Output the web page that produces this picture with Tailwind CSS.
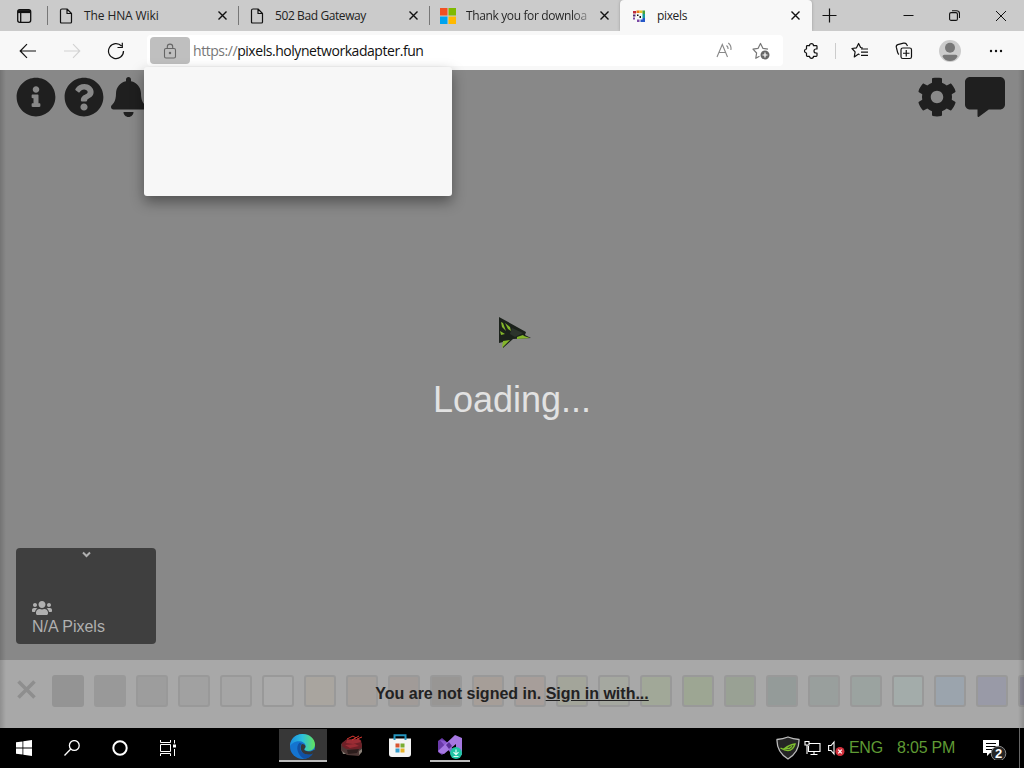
<!DOCTYPE html>
<html lang="en">

<head>
    <meta charset="utf-8" />
    <meta name="viewport" content="width=device-width, initial-scale=1" />
    <title>pixels</title>
    <script src="https://cdn.jsdelivr.net/npm/@tailwindcss/browser@4"></script>
</head>

<body class="w-[1024px] h-[768px] overflow-hidden flex flex-col bg-black font-['Liberation_Sans',sans-serif]">
    <!-- Tab strip -->
    <div class="h-[31px] shrink-0 flex bg-[#cbcbcb] font-['Open_Sans',sans-serif] text-[12px] text-[#222]">
        <div class="w-12 flex items-center justify-center border-r border-[#777] my-1.5">
            <svg class="w-4 h-4" viewBox="0 0 16 16" fill="none" stroke="#111" stroke-width="1.3"><rect x="1.7" y="1.7" width="13" height="12.6" rx="2" /><path d="M2 3.6h12.5" stroke-width="3" /><path d="M4.7 4v10" /></svg>
        </div>
        <div class="w-[191px] flex items-center border-r border-[#777] my-1.5 pl-[11px] pr-[10px]">
            <svg class="w-3.5 h-4" viewBox="0 0 14 16" fill="none" stroke="#111" stroke-width="1.2" stroke-linejoin="round"><path d="M1.5 2.5q0-1.5 1.5-1.5h5l4.5 4.5V14q0 1-1 1h-9q-1 0-1-1zM8 1v4.5h4.5" /></svg>
            <span class="ml-[11px] flex-1 whitespace-nowrap tracking-[-0.1px]">The HNA Wiki</span>
            <svg class="w-[11px] h-[11px]" viewBox="0 0 11 11" stroke="#111" stroke-width="1.4"><path d="M1.5 1.5l8 8m0-8l-8 8" /></svg>
        </div>
        <div class="w-[191px] flex items-center border-r border-[#777] my-1.5 pl-[11px] pr-[10px]">
            <svg class="w-3.5 h-4" viewBox="0 0 14 16" fill="none" stroke="#111" stroke-width="1.2" stroke-linejoin="round"><path d="M1.5 2.5q0-1.5 1.5-1.5h5l4.5 4.5V14q0 1-1 1h-9q-1 0-1-1zM8 1v4.5h4.5" /></svg>
            <span class="ml-[11px] flex-1 whitespace-nowrap tracking-[-0.4px]">502 Bad Gateway</span>
            <svg class="w-[11px] h-[11px]" viewBox="0 0 11 11" stroke="#111" stroke-width="1.4"><path d="M1.5 1.5l8 8m0-8l-8 8" /></svg>
        </div>
        <div class="w-[190px] flex items-center my-1.5 pl-[10px] pr-[10px]">
            <svg class="w-4 h-4 shrink-0" viewBox="0 0 16 16"><path fill="#f25022" d="M0 0h7.5v7.5H0z" /><path fill="#7fba00" d="M8.5 0H16v7.5H8.5z" /><path fill="#00a4ef" d="M0 8.5h7.5V16H0z" /><path fill="#ffb900" d="M8.5 8.5H16V16H8.5z" /></svg>
            <span class="ml-[10px] w-[124px] whitespace-nowrap tracking-[-0.37px] bg-gradient-to-r from-[#222] from-85% to-[#222]/25 bg-clip-text text-transparent">Thank you for downloa</span>
            <svg class="ml-auto w-[11px] h-[11px] shrink-0" viewBox="0 0 11 11" stroke="#111" stroke-width="1.4"><path d="M1.5 1.5l8 8m0-8l-8 8" /></svg>
        </div>
        <div class="w-[192px] flex items-center bg-[#f8f8f8] rounded-t pl-3 pr-[11px] shadow-[0_0_3px_#999]">
            <svg class="w-[14px] h-[14px]" viewBox="0 0 14 14"><path fill="#c02a3c" d="M1 2h3v2.5H1z" /><path fill="#e8751a" d="M4.5 1.500h3V4h-3z" /><path fill="#e9c32a" d="M7.500 1.500h3V4h-3z" /><path fill="#46a33b" d="M10.500 1.500H13V5h-2.500z" /><path fill="#552a69" d="M1 5.500h2.500v2H1z" /><path fill="#111" d="M5 5.500h1.500V7H5zM7.500 7H9v2H7.500z" /><path fill="#179d9b" d="M10.500 5H13v4h-2.500z" /><path fill="#7b49a5" d="M1 8.500h2v2H1zM5 10.500h2.500V13H5z" /><path fill="#2558c8" d="M8.500 10.500h2V13h-2zM10.500 9H13v4h-2.500z" /></svg>
            <span class="ml-[11px] flex-1 tracking-[-0.35px]">pixels</span>
            <svg class="w-[11px] h-[11px]" viewBox="0 0 11 11" stroke="#111" stroke-width="1.4"><path d="M1.5 1.5l8 8m0-8l-8 8" /></svg>
        </div>
        <div class="flex-1 flex items-center pl-[10px] pr-[17px]">
            <svg class="w-[15px] h-[15px]" viewBox="0 0 15 15" stroke="#111" stroke-width="1.2"><path d="M7.5.5v14m-7-7h14" /></svg>
            <svg class="ml-auto w-[11px] h-[11px]" viewBox="0 0 11 11" stroke="#111"><path d="M.5 5.5h10" /></svg>
            <svg class="ml-[35px] w-[11px] h-[11px]" viewBox="0 0 11 11" fill="none" stroke="#111" stroke-width="1.1"><rect x=".6" y="2.6" width="7.8" height="7.8" rx="1.5" /><path d="M3 .7h4.500q3 0 3 3V8" /></svg>
            <svg class="ml-[35px] w-[12px] h-[12px]" viewBox="0 0 12 12" stroke="#111"><path d="M1 1l10 10m0-10L1 11" /></svg>
        </div>
    </div>

    <!-- Toolbar -->
    <div class="h-[39px] shrink-0 flex items-center bg-[#f8f8f8] pl-[19px] pr-[21px]">
        <svg class="w-[18px] h-4" viewBox="0 0 18 16" fill="none" stroke="#111" stroke-width="1.2"><path d="M17 8H1.5M8 1.2L1.2 8 8 14.8" /></svg>
        <svg class="ml-[26px] w-[18px] h-4" viewBox="0 0 18 16" fill="none" stroke="#d2d2d2" stroke-width="1.1"><path d="M1 8h15.5M10 1.2L16.8 8 10 14.8" /></svg>
        <svg class="ml-[26px] w-[18px] h-[18px]" viewBox="0 0 18 18" fill="none" stroke="#111" stroke-width="1.2"><path d="M16.5 9A7.500 7.500 0 1 1 14.500 4M15.300.8v4.700h-4.800" /></svg>
        <div class="ml-[22px] w-[636px] h-[31px] flex items-center bg-white rounded-sm pl-[3px] pr-[13px] font-['Open_Sans',sans-serif] text-[14px] text-[#111]">
            <div class="w-10 h-[27px] flex items-center justify-center bg-[#bfbfbf] rounded-sm">
                <svg class="w-[14px] h-4" viewBox="0 0 14 16" fill="none" stroke="#666" stroke-width="1.1"><rect x="1.5" y="5.5" width="11" height="9.5" rx="1.5" /><path d="M4.300 5.500V3.800a2.700 2.700 0 0 1 5.400 0v1.700" /><circle cx="7" cy="10" r=".7" fill="#555" /></svg>
            </div>
            <span class="ml-[3px] tracking-[-0.45px] whitespace-nowrap"><span class="text-[#777]">https://</span>pixels.holynetworkadapter.fun</span>
            <svg class="ml-auto w-[17px] h-[17px]" viewBox="0 0 17 17" fill="none" stroke="#888" stroke-width="1.1"><path d="M1 15L6.300 2.500 11.500 15M3 10.500h6.800M10.500 3.500q1.800 1.500 1.600 3.500M12.300 1q3.300 2.500 2.600 7" /></svg>
            <svg class="ml-[19px] w-[18px] h-[18px]" viewBox="0 0 18 18" fill="none" stroke="#777" stroke-width="1.2" stroke-linejoin="round"><path d="M7.500 14.200L3.800 16.300l.8-5.300L1 7.200l5-.8L8.500 1.500 11 6.400l5 .8" /><circle cx="13" cy="13" r="4.500" fill="#666" stroke="none" /><path d="M13 10.500v5M10.500 13h5" stroke="#fff" /></svg>
        </div>
        <!-- Extensions: puzzle piece with a bump on the left and a notch on the right -->
        <svg class="ml-[20px] w-4 h-4" viewBox="0 0 16 16" fill="none" stroke="#111" stroke-width="1.2" stroke-linejoin="round"><path d="M3.500 3.500q0-.8.8-.8H6.500a2 2 0 0 1 4 0h2.700q.8 0 .8.800v2.500h-1a1.900 1.900 0 1 0 0 4h1v2.500q0 .8-.8.8h-2.700a2 2 0 0 1-4 0H4.300q-.8 0-.8-.8V10a2 2 0 0 1 0-4z" /></svg>
        <div class="ml-[16px] w-px h-[16px] bg-[#ccc]"></div>
        <svg class="ml-[15px] w-[18px] h-[17px]" viewBox="0 0 18 17" fill="none" stroke="#111" stroke-width="1.2" stroke-linejoin="round"><path d="M8.500 12.700l-1-.6-4.200 2.800.8-5L1 6.500l4.500-.7L7.600 1.500l2 4 2 .4M10 7h7M10 10.200h7M10 13.400h7" /></svg>
        <svg class="ml-[26px] w-[18px] h-[18px]" viewBox="0 0 18 18" fill="none" stroke="#111" stroke-width="1.2"><rect x="6" y="6" width="10.5" height="10.5" rx="1.8" /><path d="M11.250 8v6.500M8 11.250h6.500M4 12.500Q3 12 2.500 10L1.300 5.200q-.4-2 1.500-2.600L8.500 1.200q2-.4 3 1L12.500 4" /></svg>
        <svg class="ml-[26px] w-[22px] h-[22px]" viewBox="0 0 22 22"><circle cx="11" cy="11" r="11" fill="#ccc" /><circle cx="11" cy="7.800" r="5" fill="#777" /><path fill="#777" d="M3.500 16.500q0-1.800 2-1.800h11q2 0 2 1.800-2.500 4.500-7.500 4.500t-7.500-4.500z" /></svg>
        <svg class="ml-auto w-[14px] h-1" viewBox="0 0 14 4" fill="#111"><circle cx="2" cy="2" r="1.2" /><circle cx="7" cy="2" r="1.2" /><circle cx="12" cy="2" r="1.2" /></svg>
    </div>

    <!-- Page -->
    <main class="relative h-[658px] shrink-0 flex flex-col bg-[#888]">
        <div class="flex justify-between pl-4 pr-[19px] pt-[7px] text-[#1f1f1f]">
            <div class="flex gap-2">
                <svg class="w-10 h-10" viewBox="0 0 512 512" fill="currentColor"><path d="M256 8C119.043 8 8 119.083 8 256c0 136.997 111.043 248 248 248s248-111.003 248-248C504 119.083 392.957 8 256 8zm0 110c23.196 0 42 18.804 42 42s-18.804 42-42 42-42-18.804-42-42 18.804-42 42-42zm56 254c0 6.627-5.373 12-12 12h-88c-6.627 0-12-5.373-12-12v-24c0-6.627 5.373-12 12-12h12v-64h-12c-6.627 0-12-5.373-12-12v-24c0-6.627 5.373-12 12-12h64c6.627 0 12 5.373 12 12v100h12c6.627 0 12 5.373 12 12v24z" /></svg>
                <svg class="w-10 h-10" viewBox="0 0 512 512" fill="currentColor"><path d="M504 256c0 136.997-111.043 248-248 248S8 392.997 8 256C8 119.083 119.043 8 256 8s248 111.083 248 248zM262.655 90c-54.497 0-89.255 22.957-116.549 63.758-3.536 5.286-2.353 12.415 2.715 16.258l34.699 26.310c5.205 3.947 12.621 3.008 16.665-2.122 17.864-22.658 30.113-35.797 57.303-35.797 20.429 0 45.698 13.148 45.698 32.958 0 14.976-12.363 22.667-32.534 33.976C247.128 238.528 216 254.941 216 296v4c0 6.627 5.373 12 12 12h56c6.627 0 12-5.373 12-12v-1.333c0-28.462 83.186-29.647 83.186-106.667 0-58.002-60.165-102-116.531-102zM256 338c-25.365 0-46 20.635-46 46 0 25.364 20.635 46 46 46s46-20.636 46-46c0-25.365-20.635-46-46-46z" /></svg>
                <svg class="w-[35px] h-10 -ml-px" viewBox="0 0 448 512" fill="currentColor"><path d="M224 512c35.320 0 63.970-28.650 63.970-64H160.030c0 35.350 28.650 64 63.970 64zm215.390-149.710c-19.320-20.760-55.470-51.990-55.470-154.290 0-77.700-54.480-139.900-127.940-155.160V32c0-17.670-14.320-32-31.980-32s-31.980 14.330-31.980 32v20.840C118.560 68.100 64.080 130.300 64.080 208c0 102.300-36.150 133.530-55.470 154.290-6 6.450-8.660 14.160-8.610 21.710.11 16.400 12.980 32 32.100 32h383.800c19.120 0 32-15.600 32.100-32 .05-7.550-2.610-15.270-8.610-21.710z" /></svg>
            </div>
            <div class="flex gap-2">
                <svg class="w-10 h-10" viewBox="0 0 512 512" fill="currentColor"><path d="M487.400 315.700l-42.600-24.600c4.300-23.200 4.300-47 0-70.200l42.600-24.600c4.900-2.800 7.100-8.600 5.500-14-11.100-35.600-30-67.800-54.700-94.600-3.800-4.100-10-5.100-14.800-2.300L380.800 110c-17.900-15.400-38.500-27.300-60.800-35.100V25.800c0-5.600-3.900-10.500-9.400-11.700-36.700-8.200-74.300-7.800-109.200 0-5.500 1.200-9.400 6.100-9.400 11.700V75c-22.200 7.900-42.800 19.800-60.800 35.100L88.700 85.500c-4.900-2.800-11-1.900-14.800 2.300-24.700 26.700-43.600 58.900-54.700 94.600-1.700 5.400.6 11.200 5.500 14L67.300 221c-4.300 23.200-4.300 47 0 70.200l-42.600 24.600c-4.900 2.800-7.100 8.600-5.500 14 11.100 35.600 30 67.800 54.700 94.600 3.800 4.100 10 5.100 14.800 2.300l42.600-24.600c17.900 15.400 38.500 27.300 60.800 35.100v49.200c0 5.600 3.900 10.500 9.400 11.700 36.700 8.200 74.300 7.800 109.200 0 5.500-1.200 9.400-6.100 9.400-11.700v-49.200c22.200-7.900 42.800-19.800 60.800-35.100l42.600 24.600c4.900 2.800 11 1.900 14.800-2.300 24.700-26.700 43.600-58.900 54.700-94.600 1.500-5.500-.7-11.300-5.600-14.100zM256 336c-44.100 0-80-35.900-80-80s35.900-80 80-80 80 35.900 80 80-35.900 80-80 80z" /></svg>
                <svg class="w-10 h-10" viewBox="0 0 512 512" fill="currentColor"><path d="M448 0H64C28.700 0 0 28.700 0 64v288c0 35.300 28.700 64 64 64h96v84c0 9.800 11.200 15.500 19.100 9.700L304 416h144c35.300 0 64-28.700 64-64V64c0-35.300-28.700-64-64-64z" /></svg>
            </div>
        </div>

        <div class="flex-1 flex flex-col justify-end items-start pl-4 pb-4">
            <div class="w-[140px] h-24 flex flex-col bg-[#3f3f3f] rounded px-4 pb-[7px] text-[#b0b0b0]">
                <svg class="mt-[3px] w-[9px] h-[7px] self-center" viewBox="0 0 9 7" fill="none" stroke="currentColor" stroke-width="2"><path d="M1 1.5L4.500 5 8 1.500" /></svg>
                <svg class="mt-auto w-5 h-4" viewBox="0 0 640 512" fill="currentColor"><path d="M96 224c35.300 0 64-28.700 64-64s-28.700-64-64-64-64 28.700-64 64 28.700 64 64 64zm448 0c35.300 0 64-28.700 64-64s-28.700-64-64-64-64 28.700-64 64 28.700 64 64 64zm32 32h-64c-17.600 0-33.500 7.100-45.100 18.600 40.300 22.100 68.900 62 75.100 109.400h66c17.700 0 32-14.300 32-32v-32c0-35.300-28.700-64-64-64zm-256 0c61.900 0 112-50.100 112-112S381.900 32 320 32 208 82.100 208 144s50.100 112 112 112zm76.800 32h-8.300c-20.800 10-43.900 16-68.500 16s-47.600-6-68.500-16h-8.300C179.600 288 128 339.600 128 403.200V432c0 26.500 21.500 48 48 48h288c26.500 0 48-21.500 48-48v-28.800c0-63.600-51.600-115.200-115.200-115.200zm-223.700-13.400C161.500 263.100 145.600 256 128 256H64c-35.300 0-64 28.700-64 64v32c0 17.700 14.300 32 32 32h65.900c6.300-47.400 34.900-87.300 75.200-109.400z" /></svg>
                <span class="mt-px text-base leading-5 whitespace-nowrap">N/A Pixels</span>
            </div>
        </div>

        <!-- Palette -->
        <div class="relative h-[68px] shrink-0 bg-[#a8a8a8] flex items-center pl-[17px] pb-[6px] overflow-hidden">
            <svg class="w-[19px] h-[19px] mr-4 mb-1 shrink-0" viewBox="0 0 19 19" stroke="#8e8e8e" stroke-width="3.6"><path d="M1.5 1.5l16 16m0-16l-16 16" /></svg>
            <div id="palette" class="flex gap-2.5"></div>
            <p class="absolute inset-x-0 top-[22px] text-center font-bold text-base leading-6 text-[#222] whitespace-nowrap">You are not signed in. <a class="underline">Sign in with...</a></p>
        </div>

        <!-- Edge vignette -->
        <div class="absolute inset-y-0 left-0 w-1.5 bg-gradient-to-r from-black/15 to-transparent"></div>
        <div class="absolute inset-y-0 right-0 w-1.5 bg-gradient-to-l from-black/15 to-transparent"></div>

        <!-- Loading overlay -->
        <p class="absolute inset-x-0 top-[309px] text-center text-[36px] leading-[42px] text-[#e2e2e2]">Loading...</p>

        <!-- Site info popup -->
        <div class="absolute left-36 -top-[3px] w-[308px] h-[129px] bg-[#f7f7f7] rounded-[3px] shadow-[0_6px_14px_rgba(0,0,0,0.4)]"></div>

        <!-- Cursor -->
        <svg class="absolute left-[498px] top-[247px] w-[33px] h-[33px]" viewBox="0 0 33 33"><path fill="#1b211b" d="M1 0l27 15-1 3 6 3-18 1-10 9v-6l-4 1z" /><path fill="#84b62b" d="M3 5l2 1 3 8-4-4zM7 6l5 4 1 4-3-2zM2 14l5 3-4 1zM19 20l6-2 1 1 6 2-13 1zM5 24l7-1-8 8z" /><path fill="#2c342c" d="M14 11l11 5-8 4-5-3z" /></svg>
    </main>

    <!-- Taskbar -->
    <footer class="h-10 shrink-0 flex items-center bg-black">
        <div class="w-12 flex justify-center">
            <svg class="w-4 h-4" viewBox="0 0 16 16" fill="#fff"><path d="M0 2.300L6.500 1.400v6.200H0zM7.300 1.300L16 0v7.600H7.300zM0 8.400h6.500v6.200L0 13.700zM7.300 8.400H16V16l-8.700-1.300z" /></svg>
        </div>
        <div class="w-12 flex justify-center">
            <svg class="w-4 h-4" viewBox="0 0 16 16" fill="none" stroke="#fff" stroke-width="1.3"><circle cx="10.300" cy="5.500" r="4.900" /><path d="M6.800 9L.5 15.500" /></svg>
        </div>
        <div class="w-12 flex justify-center">
            <svg class="w-4 h-4" viewBox="0 0 16 16" fill="none" stroke="#fff" stroke-width="2"><circle cx="8" cy="8" r="6.700" /></svg>
        </div>
        <div class="w-12 flex justify-center">
            <svg class="w-4 h-4" viewBox="0 0 16 16" fill="none" stroke="#fff"><path d="M.5 0v2.500h10V0M.5 16v-2.500h10V16M.5 4.500h10v7H.5zM14.500 0v3.500M14.500 9v7" /><path fill="#fff" stroke="none" d="M13 4.500h3v3h-3z" /></svg>
        </div>
        <div class="ml-[87px] w-12 h-[33px] self-end mb-[6px] flex items-center justify-center bg-[#373737] border-b-2 border-[#bbb]">
            <svg class="w-[25px] h-[25px] mt-1 -ml-px" viewBox="0 0 24 24">
                <defs>
                    <linearGradient id="edgeTop" x1="0" y1=".5" x2="1" y2=".5"><stop offset="0" stop-color="#1b8de0" /><stop offset=".5" stop-color="#2cc0dc" /><stop offset="1" stop-color="#63e35b" /></linearGradient>
                </defs>
                <circle cx="12" cy="12" r="12" fill="#1474cf" />
                <path fill="url(#edgeTop)" d="M0 12C0 5 5 0 12 0c7 0 12 4.700 12 10 0 4-3 6.200-6.300 6.200-2.500 0-4-.8-4-1.600 0-.8 1.300-1.200 1.300-3C15 9 12 7 8.500 7 4 7 1 9.500 0 12z" />
                <path fill="#1151a3" d="M9.200 8.500C5 12 7 20.500 13.500 23.800 17 24 21 21 22.300 18.300c-4 2.200-9 1.300-11.500-1.800C9 14 9.300 11 11.500 9.300z" />
                <path fill="#373737" d="M11.500 9.500c2 0 3.400 1.300 3.400 2.600 0 1.400-1.300 1.900-1.300 2.600 0 1.300 2 2 4.500 2 2 0 3.700-.7 4.900-1.700l1.200.8c-.5 1.600-1 2.300-1.900 2.800-4 2.100-9.500 1-11.300-2.400-1.100-2.300-.9-5 .5-6.700z" />
            </svg>
        </div>
        <div class="ml-[13px] w-6 h-[33px] flex items-center justify-center">
            <svg class="w-6 h-6 -mt-1" viewBox="0 0 24 24"><path fill="#4c3735" d="M1 10l5-4 13-1 3 5v6l-3 6-12-1-6-4z" /><path fill="#6e2027" d="M2 9l5-4 14 1 1 7-4 3-12-1-4-3z" /><path fill="#9a2c34" d="M7 6l12-1 2 3-8 2-7-1zM5 11l10-1 4 2-9 2z" /><path stroke="#d8362f" d="M7 5l6-3 3 2M12 6l7-4M17 5l5-2" /><path fill="#2b1d1c" d="M7 16l12-1-2 4-9 1z" /><path fill="#8a8178" d="M19 17l3-2v3l-3 3zM2 17l4 3h-3z" /></svg>
        </div>
        <div class="ml-[24px] w-6 h-[33px] flex items-center justify-center">
            <svg class="w-6 h-6 -mt-1" viewBox="0 0 24 24"><path fill="#f4f4f4" d="M1 4.500h22V20q0 3-3 3H4q-3 0-3-3z" /><path d="M6.500 6V1.300h11V6" fill="none" stroke="#2594bd" stroke-width="2" /><path fill="#d85430" d="M7.500 9.500h4v4h-4z" /><path fill="#79ad32" d="M12.500 9.500h4v4h-4z" /><path fill="#349ccb" d="M7.500 14.500h4v4h-4z" /><path fill="#e8b32a" d="M12.500 14.500h4v4h-4z" /></svg>
        </div>
        <div class="ml-[18px] w-10 h-[33px] self-end mb-[6px] flex items-center justify-center border-b-2 border-[#bbb]">
            <svg class="w-[26px] h-6 mt-1" viewBox="0 0 26 24"><path fill="#6a3aa9" d="M1 6l4-3 6 5-2 8-4 4-4-3z" /><path fill="#8c5bd0" d="M3 5l5 1 13 13-4 3z" /><path fill="#a678e2" d="M18 0l7 3v17l-6-2V9L7 19l-4-1L1 16z" /><path fill="#5a2e96" d="M9 10l3-3 3 4-3 3z" /><circle cx="19" cy="18" r="6" fill="#20c5a5" /><path d="M19 14.500v5m-2.500-2.300l2.500 2.500 2.500-2.500M16.500 21.500h5" fill="none" stroke="#d9fff4" stroke-width="1.2" /></svg>
        </div>
        <!-- Tray -->
        <svg class="ml-[306px] w-6 h-6" viewBox="0 0 24 24"><path fill="#252525" stroke="#bbb" stroke-width="1.3" d="M1 3.500Q7 3 12 1q5 2 11 2.500Q23.500 16 12 23 .5 16 1 3.500z" /><path fill="none" stroke="#7fc02e" stroke-width="1.4" d="M4.500 12q4 2.500 7.500 2.500 5 0 7-6.500-5 .5-10.500 4.500l5-.3 2.500-2" /></svg>
        <svg class="ml-1 w-[17px] h-4" viewBox="0 0 17 16" fill="none" stroke="#fff" stroke-width="1.1"><path d="M5 3.500h11v8H4.500V6M1 1.500h4v3.500H1zM3 5V14M10 11.500v3M6.500 14.500h7" /></svg>
        <svg class="ml-[7px] w-[17px] h-4" viewBox="0 0 17 16" fill="none"><path stroke="#fff" stroke-width="1.1" d="M.6 5.500h2.500L6 2v12l-2.900-3.500H.6z" /><circle cx="12" cy="11.500" r="4.500" fill="#d3303c" /><path stroke="#fff" stroke-width="1.2" d="M10.200 9.700l3.600 3.600m0-3.600l-3.600 3.600" /></svg>
        <span class="ml-[4px] w-[34px] text-base tracking-[-0.3px] text-[#5f9a34] whitespace-nowrap">ENG</span>
        <span class="ml-[14px] w-[60px] text-base tracking-[-0.2px] text-[#5f9a34] whitespace-nowrap">8:05 PM</span>
        <div class="relative ml-[26px] w-6 h-6">
            <svg class="w-6 h-6" viewBox="0 0 24 24"><path fill="#fff" d="M0 4h16v13H7l-3 3v-3H0z" /><path stroke="#000" stroke-width="1.2" d="M3 7.500h10M3 10.500h10M3 13.500h6" /><circle cx="15.500" cy="17.500" r="7.300" fill="#252525" stroke="#888" /></svg>
            <span class="absolute left-[12px] top-[11px] text-[13px] leading-[14px] font-bold text-white">2</span>
        </div>
        <div class="ml-auto mr-1 w-px h-10 bg-[#666]"></div>
    </footer>

    <script>
        const colors = [
            '#949494', '#999999', '#9d9d9d', '#a1a1a1', '#a5a5a5', '#aaaaaa',
            '#a9a59f', '#a5a09c', '#a19b98', '#989694', '#a69e98', '#a79e9a',
            '#a3a59a', '#a5a8a0', '#a1a898', '#9da693', '#99a194', '#949b99',
            '#999f9d', '#9ba3a0', '#a3acaa', '#9ba4ad', '#999aa7', '#8d8c98'
        ];
        const palette = document.getElementById('palette');

        colors.forEach((color, i) => {
            const border = i === 0 ? 'border-transparent' : 'border-[#999]';
            palette.innerHTML += `<div class="w-8 h-8 shrink-0 rounded-[3px] border-2 ${border}" style="background:${color}"></div>`;
        });
    </script>
</body>

</html>
